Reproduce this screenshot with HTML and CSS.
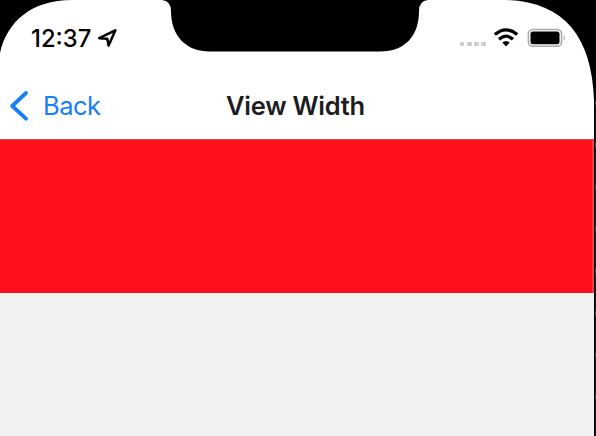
FILE: index.html
```html
<!DOCTYPE html>
<html lang="en">
<head>
<meta charset="utf-8">
<title>View Width</title>
<link rel="stylesheet" href="styles.css">
</head>
<body>
<div class="device">
  <main class="screen">
    <div class="status-bar">
      <div class="clock">
        <span class="time">12:37</span>
        <svg class="location" width="20" height="20" viewBox="0 0 20 20"><path d="M2.2 10.2 18.3 2.4 11.6 17.6 10.3 10.8Z"/></svg>
      </div>
      <div class="indicators">
        <div class="signal"><i></i><i></i><i></i><i></i></div>
        <svg class="wifi" width="26" height="20" viewBox="0 0 26 20">
          <path class="wave" d="M1.8 6.6Q13-2.8 24.2 6.6M6 11.3Q13 5 20 11.3"/>
          <path d="M9.3 14.5Q13 11.5 16.7 14.5L13 18.6Z"/>
        </svg>
        <svg class="battery" width="40" height="20" viewBox="0 0 40 20">
          <rect class="shell" x="1.4" y="1.5" width="33.2" height="16.8" rx="4.6"/>
          <rect x="3.5" y="3.6" width="29" height="12.6" rx="2.5"/>
          <path class="cap" d="M36.8 7Q39 9.7 36.8 12.6Z"/>
        </svg>
      </div>
    </div>
    <nav class="nav-bar">
      <a class="back">
        <svg width="20" height="32" viewBox="0 0 20 32"><path d="M17 3 3.2 16 17 28.7"/></svg>
        <span>Back</span>
      </a>
      <h1>View Width</h1>
    </nav>
    <section class="banner"></section>
  </main>
  <div class="edge"></div>
  <svg class="bezel" width="596" height="150" viewBox="0 0 596 150">
    <path d="M0 0H72C31 0 7 22 0 53ZM162 0H428Q419 1 419 11C419 36 405 51.5 380 51.5H210C186 51.5 171 36 171 11Q171 1 162 0ZM502 0H596V100H594C592 36 563 0 502 0Z"/>
  </svg>
</div>
</body>
</html>
```
FILE: styles.css
```css
* { box-sizing: border-box; }
body { margin: 0; background: #000; font-family: Inter, sans-serif; }
.device { position: relative; display: flex; width: 596px; height: 436px; overflow: hidden; }
.screen { width: 594px; background: #f1f1f1; }
.status-bar { display: flex; justify-content: space-between; height: 72px; padding: 27px 27px 0 31px; background: #fff; }
.clock, .indicators { display: flex; height: 22px; align-items: center; }
.clock { gap: 6px; }
.time { padding-top: 1px; font-size: 23.8px; font-weight: 550; line-height: 22px; }
.location { fill: none; stroke: #000; stroke-width: 2.5; stroke-linejoin: round; }
.signal { display: flex; gap: 2.4px; margin: 12px 7px 0 0; }
.signal i { width: 4.8px; height: 4.8px; border-radius: 1.3px; background: #ccc; }
.wifi { margin-right: 8px; }
.wave { fill: none; stroke: #000; stroke-width: 3.3; }
.shell { fill: none; stroke: #aaa; stroke-width: 1.6; }
.cap { fill: #999; }
.nav-bar { display: grid; grid-template-columns: 1fr auto 1fr; align-items: center; height: 67px; padding: 1px 9px 0 9px; background: #fff; }
.back { display: flex; align-items: center; gap: 14px; color: #167efb; font-size: 25.5px; letter-spacing: -0.5px; }
.back span { margin-top: -1px; }
.back svg { fill: none; stroke: #167efb; stroke-width: 3.8; stroke-linecap: round; stroke-linejoin: round; }
h1 { margin: 0 0 0 -3px; color: #1d1d1f; font-size: 25.5px; font-weight: 570; letter-spacing: -0.25px; line-height: 32px; }
.banner { height: 154px; background: #ff0f1b; border-top: 1px solid #d0484c; border-right: 2px solid #ff3b42; }
.edge { width: 2px; background: repeating-linear-gradient(#151515 0 16px, #4c4c4c 18px 20px, #151515 22px 42px); border-left: 1px solid #000; }
.bezel { position: absolute; top: 0; left: 0; }
```
